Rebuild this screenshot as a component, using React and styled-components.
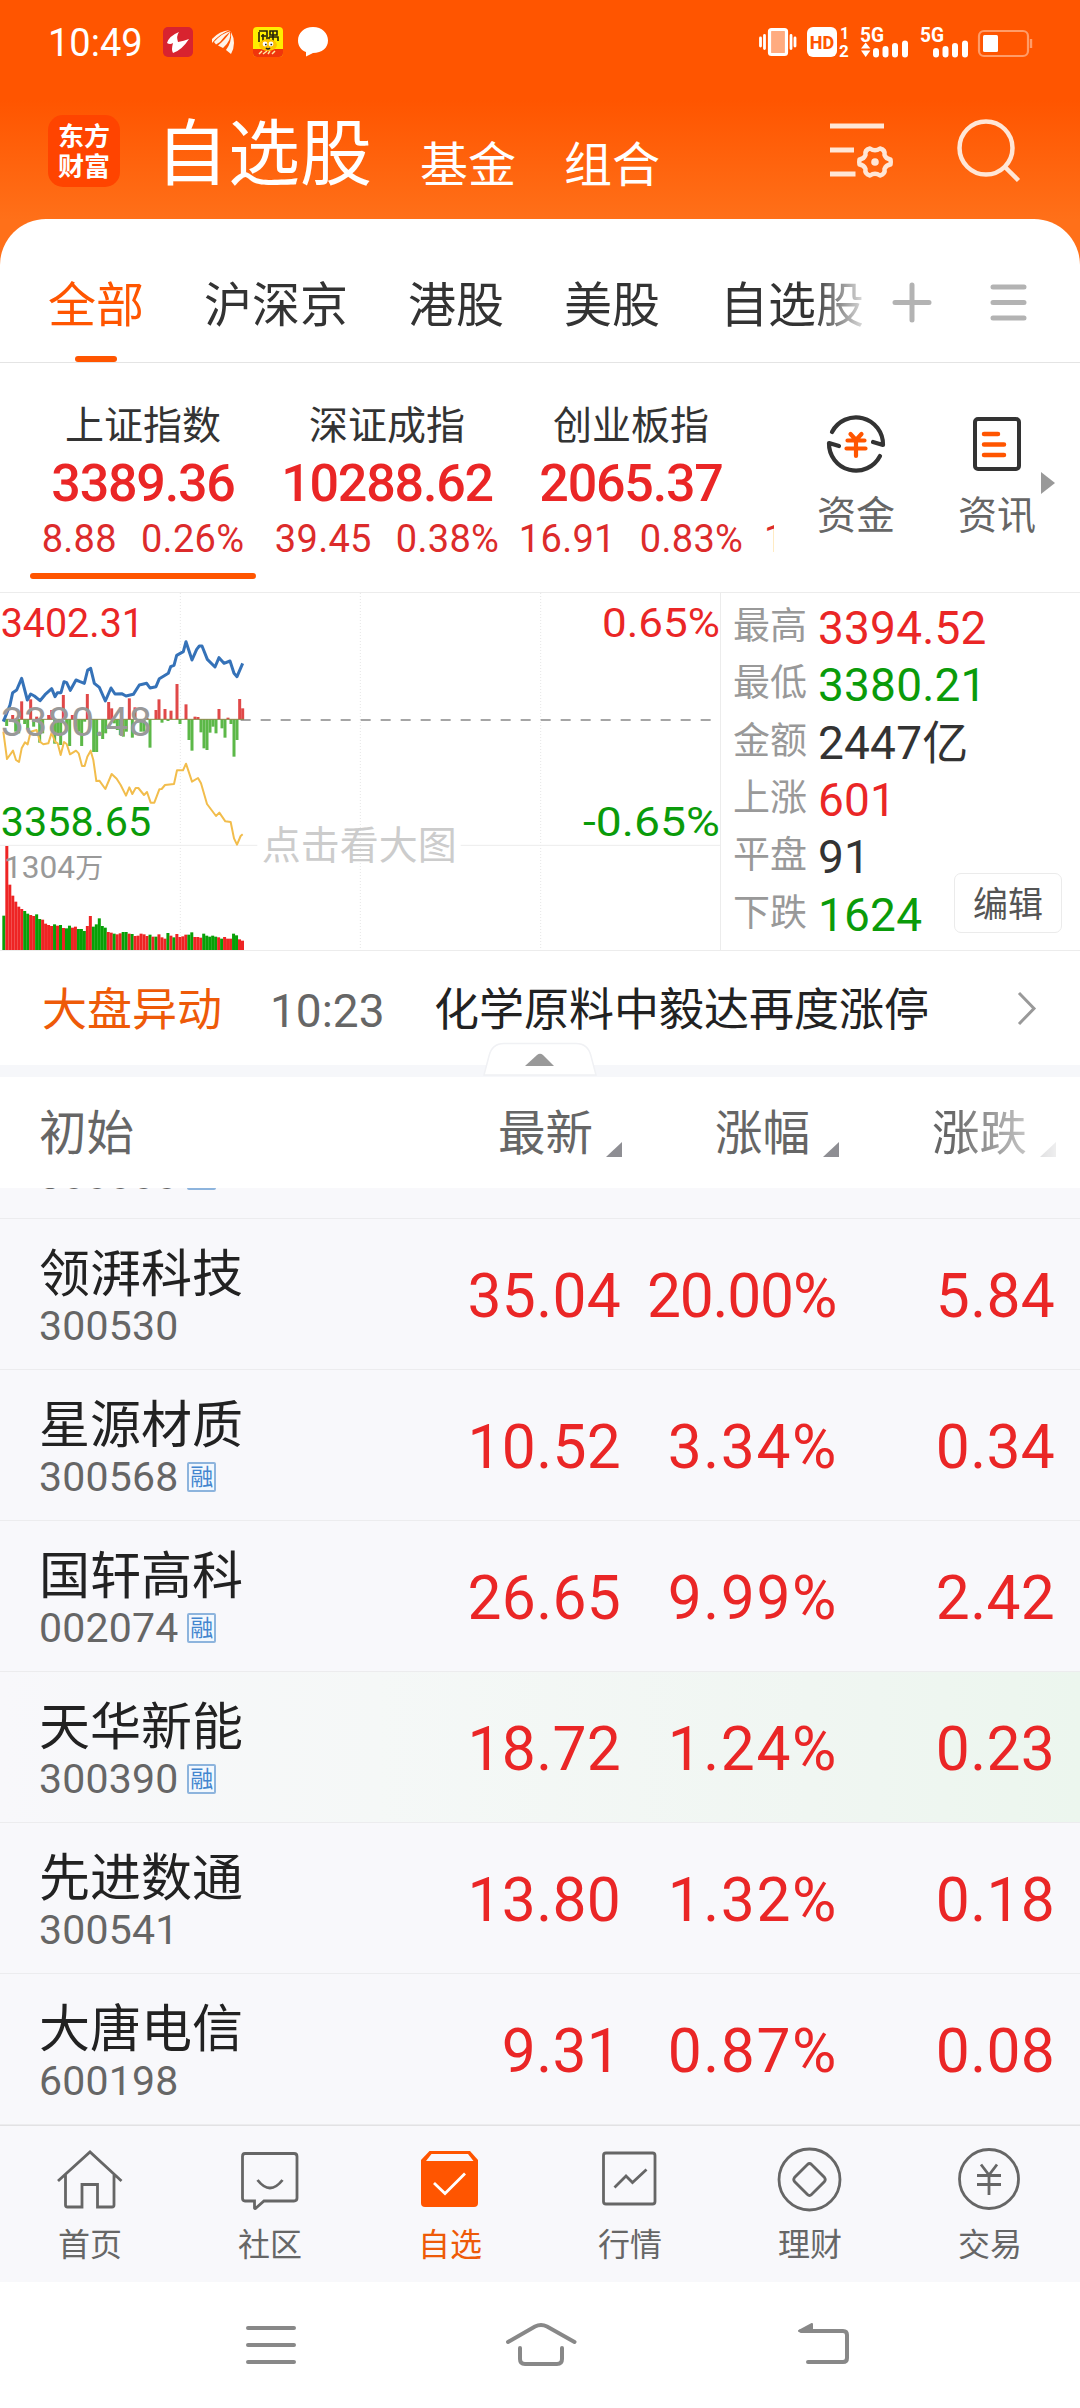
import React from "react";
import styled, { createGlobalStyle, css } from "styled-components";

const GlobalStyle = createGlobalStyle`
  * {
    box-sizing: border-box;
  }
  body {
    margin: 0;
    background: #fff;
    font-family: Roboto, "Noto Sans CJK SC", sans-serif;
    color: #333;
  }
  svg {
    display: block;
    flex: none;
    overflow: visible;
  }
`;

const RED = "#ea2626";
const GREEN = "#0a9b0a";
const ORANGE = "#ff5500";

const tabs = ["全部", "沪深京", "港股", "美股", "自选股"];

const indexData = [
  { name: "上证指数", value: "3389.36", diff: "8.88", rate: "0.26%", active: true },
  { name: "深证成指", value: "10288.62", diff: "39.45", rate: "0.38%" },
  { name: "创业板指", value: "2065.37", diff: "16.91", rate: "0.83%" },
];

const statData = [
  { label: "最高", value: "3394.52", color: RED },
  { label: "最低", value: "3380.21", color: GREEN },
  { label: "金额", value: "2447亿", color: "#333" },
  { label: "上涨", value: "601", color: RED },
  { label: "平盘", value: "91", color: "#333" },
  { label: "下跌", value: "1624", color: GREEN },
];

const stockData = [
  { name: "领湃科技", code: "300530", price: "35.04", rate: "20.00%", diff: "5.84" },
  { name: "星源材质", code: "300568", margin: true, price: "10.52", rate: "3.34%", diff: "0.34" },
  { name: "国轩高科", code: "002074", margin: true, price: "26.65", rate: "9.99%", diff: "2.42" },
  { name: "天华新能", code: "300390", margin: true, price: "18.72", rate: "1.24%", diff: "0.23", flash: true },
  { name: "先进数通", code: "300541", price: "13.80", rate: "1.32%", diff: "0.18" },
  { name: "大唐电信", code: "600198", price: "9.31", rate: "0.87%", diff: "0.08" },
];

// 成交量柱顶，第二个值为 1 表示红柱
const volumeData = [
  [977, 0], [768, 1], [884, 1], [917, 1], [935, 1], [950, 1], [957, 1], [963, 0], [971, 0],
  [975, 1], [978, 1], [973, 0], [987, 0], [989, 1], [1001, 1], [1005, 1], [1008, 1], [1003, 0],
  [1007, 1], [1005, 0], [1014, 1], [1015, 0], [1007, 0], [1013, 1], [1010, 1], [1017, 0], [1017, 0],
  [1023, 0], [1008, 1], [978, 1], [1010, 0], [1003, 0], [985, 0], [1008, 0], [1013, 0], [1026, 1],
  [1028, 1], [1031, 0], [1033, 1], [1030, 1], [1026, 0], [1026, 0], [1031, 1], [1032, 0], [1038, 1],
  [1037, 1], [1031, 1], [1033, 1], [1038, 1], [1034, 0], [1040, 1], [1040, 0], [1033, 1], [1042, 1],
  [1046, 1], [1029, 0], [1037, 1], [1042, 0], [1032, 1], [1041, 1], [1039, 1], [1034, 1], [1034, 0],
  [1027, 0], [1041, 1], [1041, 1], [1043, 1], [1031, 0], [1037, 0], [1040, 0], [1037, 0], [1040, 0],
  [1042, 1], [1046, 0], [1041, 1], [1046, 1], [1046, 1], [1031, 0], [1036, 0], [1048, 1], [1052, 1],
];

// 红绿柱: [x, y]，y 小于中线为红
const powerData = [
  [20, 408], [38, 375], [47, 425], [56, 430], [65, 334], [74, 402], [83, 418], [92, 328], [101, 410],
  [110, 380], [119, 458], [128, 430], [146, 375], [155, 360], [164, 461], [173, 430], [182, 465],
  [190, 315], [200, 410], [209, 468], [217, 375], [227, 410], [236, 425], [245, 468], [254, 395],
  [262, 312], [281, 486], [290, 486], [308, 447], [317, 430], [326, 336], [335, 355], [343, 400],
  [352, 420], [361, 435], [370, 440], [379, 425], [388, 325], [397, 443], [405, 352], [423, 425],
  [432, 425], [441, 384], [450, 473], [468, 360], [477, 328], [486, 398], [495, 357], [504, 393],
  [513, 362], [531, 282], [540, 402], [558, 343], [567, 450], [576, 482], [585, 380], [594, 381],
  [603, 427], [612, 475], [621, 480], [630, 428], [639, 410], [648, 430], [657, 357], [666, 415],
  [675, 443], [684, 383], [693, 402], [702, 500], [711, 450], [719, 327], [728, 355],
];

const priceLine =
  "10,395 20,370 30,345 38,308 50,300 65,265 82,330 92,312 103,318 120,332 135,314 155,296 165,320 172,308 183,308 192,275 200,278 211,301 228,270 240,275 253,280 263,240 272,235 283,280 298,292 316,333 333,294 345,312 365,311 378,318 400,313 418,285 440,280 450,294 468,290 478,266 505,250 512,230 522,226 530,196 550,185 558,155 576,210 590,178 598,168 606,168 622,208 645,231 657,203 672,220 690,213 702,250 711,260 728,220";

const leadLine =
  "10,425 21,507 39,482 48,510 57,516 65,475 75,457 83,463 92,425 110,420 120,455 130,463 145,460 155,428 165,455 173,460 182,495 192,456 200,462 210,493 228,482 236,490 246,528 254,528 262,500 272,482 280,510 289,573 298,572 316,597 335,552 350,566 362,585 378,617 388,592 397,612 407,594 415,594 432,615 441,606 452,638 463,638 478,598 485,597 495,585 522,582 531,541 549,541 558,521 576,575 594,564 603,580 621,642 648,678 658,668 676,694 692,696 702,745 711,764 722,738 728,733";

const Page = styled.div`
  width: 1080px;
  height: 2408px;
  overflow: hidden;
  display: flex;
  flex-direction: column;
  background: linear-gradient(#ff5500 0, #ff5500 100px, #ff7019 220px, #ff7019 300px, #fff 300px);
`;

const StatusBar = styled.div`
  height: 84px;
  display: flex;
  justify-content: space-between;
  padding: 27px 47px 0 48px;
`;

const StatusGroup = styled.div`
  display: flex;
  align-items: flex-start;
`;

const Clock = styled.span`
  width: 115px;
  font-size: 38px;
  line-height: 32px;
  color: #fff;
`;

const Header = styled.header`
  height: 135px;
  display: flex;
  padding: 0 61px 0 48px;
`;

const Logo = styled.div`
  width: 72px;
  height: 72px;
  margin-top: 31px;
  padding-top: 5px;
  border-radius: 15px;
  background: #ff4400;
  color: #fff;
  font-family: "Noto Sans CJK SC", sans-serif;
  font-size: 26px;
  font-weight: 700;
  line-height: 30px;
  text-align: center;
`;

const HeaderTabs = styled.nav`
  display: flex;
  align-items: flex-start;
  gap: 48px;
  margin-left: 36px;
  padding-top: 25px;
  flex: 1;
`;

const HeaderTab = styled.span`
  padding-top: ${(props) => (props.$active ? 0 : 11)}px;
  font-size: ${(props) => (props.$active ? 72 : 48)}px;
  line-height: 92px;
  color: #fff;
`;

const HeaderIcons = styled.div`
  display: flex;
  gap: 62px;
  padding-top: 35px;
`;

const Sheet = styled.main`
  flex: 1;
  display: flex;
  flex-direction: column;
  border-radius: 46px 46px 0 0;
  overflow: hidden;
  background: #fff;
`;

const TabBar = styled.div`
  height: 144px;
  display: flex;
  border-bottom: 1px solid #e4e4e4;
`;

const TabScroll = styled.div`
  flex: none;
  width: 862px;
  display: flex;
  gap: 60px;
  padding-left: 48px;
  overflow: hidden;
  mask-image: linear-gradient(to right, #000 812px, transparent 874px);
`;

const Tab = styled.div`
  flex: none;
  display: flex;
  flex-direction: column;
  align-items: center;
  justify-content: space-between;
  padding-top: 57px;
  font-size: 48px;
  line-height: 60px;
  color: ${(props) => (props.$active ? ORANGE : "#333")};

  &::after {
    content: "";
    width: 42px;
    height: 6px;
    border-radius: 3px;
    background: ${(props) => (props.$active ? ORANGE : "transparent")};
  }
`;

const TabTools = styled.div`
  display: flex;
  gap: 56px;
  padding: 63px 0 0 30px;
`;

const IndexBar = styled.section`
  height: 229px;
  display: flex;
  padding-left: 21px;
`;

const IndexScroll = styled.div`
  flex: none;
  width: 753px;
  display: flex;
  overflow: hidden;
`;

const IndexCard = styled.div`
  flex: none;
  width: 244px;
  display: flex;
  flex-direction: column;
  align-items: center;
  padding-top: 39px;
`;

const IndexName = styled.div`
  font-size: 39px;
  line-height: 48px;
`;

const IndexValue = styled.div`
  font-size: 52px;
  font-weight: 500;
  line-height: 68px;
  letter-spacing: -1.2px;
  color: ${RED};
`;

const IndexChange = styled.div`
  display: flex;
  gap: 24px;
  font-size: 38px;
  line-height: 42px;
  letter-spacing: 0.3px;
  color: #dc2b2b;
`;

const IndexLine = styled.div`
  width: 226px;
  height: 6px;
  margin-top: 13px;
  border-radius: 3px;
  background: ${ORANGE};
`;

const NextIndex = styled.div`
  flex: none;
  padding: 155px 0 0 11px;
  font-size: 38px;
  line-height: 42px;
  color: #dc2b2b;
`;

const Shortcuts = styled.div`
  display: flex;
  align-items: flex-start;
  gap: 63px;
  padding: 52px 0 0 43px;
`;

const Shortcut = styled.div`
  width: 78px;
  display: flex;
  flex-direction: column;
  gap: 21px;
  align-items: center;
  font-size: 39px;
  line-height: 44px;
  color: #666;
`;

const MoreArrow = styled.svg`
  margin: 109px 0 0 5px;
`;

const Market = styled.section`
  position: relative;
  height: 359px;
  display: flex;
  border-top: 1px solid #ececec;
  border-bottom: 1px solid #ececec;
`;

const ChartBox = styled.div`
  width: 721px;
  border-right: 1px solid #ececec;
`;

const Stats = styled.div`
  padding: 7px 0 0 12px;
`;

const StatRow = styled.div`
  height: 57.3px;
  display: flex;
  align-items: center;
  gap: 11px;
`;

const StatLabel = styled.span`
  font-size: 37px;
  line-height: 50px;
  margin-bottom: 3px;
  color: #999;
`;

const StatValue = styled.span`
  font-size: 46px;
  line-height: 57px;
  letter-spacing: 0.2px;
  color: ${(props) => props.$color};
`;

// 浮在统计列表右下角
const EditButton = styled.button`
  position: absolute;
  right: 18px;
  bottom: 17px;
  width: 108px;
  height: 60px;
  padding: 6px 0 0;
  border: 1px solid #ebebeb;
  border-radius: 7px;
  background: #fff;
  font: 35px/50px Roboto, "Noto Sans CJK SC", sans-serif;
  color: #555;
`;

const News = styled.section`
  position: relative;
  height: 126px;
  display: flex;
  align-items: flex-start;
  padding: 30px 43px 0 42px;
  border-bottom: 12px solid #f6f7fa;
  font-size: 45px;
  line-height: 60px;
`;

const NewsTitle = styled.span`
  width: 228px;
  color: #ee5a08;
`;

const NewsTime = styled.span`
  width: 164px;
  font-size: 46px;
  color: #666;
`;

const NewsText = styled.span`
  flex: 1;
  color: #222;
`;

const FoldHandle = styled.svg`
  position: absolute;
  left: 483px;
  bottom: -11px;
`;

const rowGrid = css`
  display: grid;
  grid-template-columns: 322px 261px 217px 217px;
  padding: 0 0 0 39px;
`;

const TableHead = styled.div`
  ${rowGrid}
  height: 111px;
  padding-top: 25px;
  font-size: 47.5px;
  line-height: 64px;
  color: #666;
`;

const HeadCell = styled.div`
  display: flex;
  justify-content: flex-end;
  gap: 13px;
  ${(props) =>
    props.$fade &&
    css`
      mask-image: linear-gradient(to right, #000 110px, rgba(0, 0, 0, 0.15) 217px);
    `}
`;

const SortMark = styled.svg`
  margin-top: 40px;
`;

const StockList = styled.div`
  background: #f8f8fb;
`;

const Peek = styled.div`
  height: 31px;
  overflow: hidden;
  display: flex;
  flex-direction: column;
  justify-content: flex-end;
`;

const StockRow = styled.div`
  ${rowGrid}
  flex: none;
  height: 151px;
  border-bottom: 1px solid #ececee;
  background: ${(props) =>
    props.$flash
      ? "linear-gradient(to right, #f8f8fb 0%, #f5f8f7 35%, #f0f6f2 75%, #ecf6ee 100%)"
      : "transparent"};
`;

const StockName = styled.div`
  padding-top: 25px;
  font-size: 51px;
  line-height: 61px;
  color: #222;
`;

const StockCode = styled.div`
  display: flex;
  align-items: center;
  gap: 9px;
  font-size: 41px;
  line-height: 42px;
  letter-spacing: 0.2px;
  color: #666;
`;

const MarginBadge = styled.span`
  width: 29px;
  height: 30px;
  border: 2px solid #8db4dd;
  border-radius: 2px;
  background: #f2f8fe;
  font-size: 23px;
  line-height: 27px;
  text-align: center;
  color: #4386cf;
`;

const StockValue = styled.div`
  font-size: 60.5px;
  line-height: 156px;
  letter-spacing: ${(props) => props.$spacing || 0.3}px;
  padding-right: ${(props) => (props.$spacing < 0 ? 3 : 1)}px;
  text-align: right;
  color: ${RED};
`;

const BottomNav = styled.nav`
  height: 157px;
  display: grid;
  grid-template-columns: repeat(6, 1fr);
  border-top: 1px solid #e2e2e4;
  background: #f8f8fb;
`;

const NavItem = styled.div`
  display: flex;
  flex-direction: column;
  align-items: center;
  gap: 14px;
  padding-top: 21px;
  font-size: 32px;
  line-height: 40px;
  color: ${(props) => (props.$active ? "#ee5a08" : "#666")};
`;

const SystemBar = styled.div`
  height: 126px;
  display: flex;
  padding: 37px 0 0 244px;
  background: #fff;
`;

const SystemIcon = styled.svg`
  margin-right: ${(props) => props.$after}px;
`;

const StatusLeftIcons = () => (
  <svg width="170" height="32" viewBox="163 27 170 32">
    <rect x="163" y="27" width="30" height="30" rx="5" fill="#d8232f" />
    <path d="M179 32 Q169 36 167 43 Q170 45 173 43 Q171 50 173 53 Q182 50 189 39 Q184 41 178 42 Q176 36 179 32Z" fill="#fff" />
    <path d="M212 43 V39 Q219 31 230 30 Q219 34 212 43Z M216 44.500 L214 42 Q222 33 231 31 Q224 36 220 42Z M223 48 L218 45.500 Q226 39 230 32 Q232 40 223 48Z M226 50 Q232 42 231 32 Q237 43 231 54Z" fill="#fff3e8" />
    <rect x="253" y="27" width="30" height="30" rx="4" fill="#ffee00" />
    <path d="M253 49h30v4q0 4-4 4h-22q-4 0-4-4z" fill="#f0350c" />
    <path d="M259 32v10M259 31h8v10M263 34v7M261 36h5M270 31h7v4h-7zM269 37h9v4M269 37v4M273 31v10" stroke="#25220a" strokeWidth="1.6" fill="none" />
    <ellipse cx="268" cy="45" rx="9" ry="6" fill="#ffc400" />
    <circle cx="265" cy="44" r="2.4" fill="#fff" />
    <circle cx="271" cy="44" r="2.4" fill="#fff" />
    <path d="M265 44.5h1.6M270.500 44.5h1.6M266 48q2 2 4 0" stroke="#222" strokeWidth="1.6" fill="none" />
    <path d="M259 54l3-3M263 54l4-3M268 54l2-3M272 54l3-3" stroke="#ffe8a0" strokeWidth="1.5" />
    <path d="M313 27 C322 27 328 33 328 40.500 C328 48 322 53 313 53 L306 56.500 L306 52 C301 50 298 46 298 40.500 C298 33 304 27 313 27Z" fill="#fff" />
  </svg>
);

const StatusRightIcons = () => (
  <svg width="275" height="32" viewBox="758 27 275 32" fill="#fff">
    <path d="M760.500 38v8M764.500 35.500v13M791 35.500v13M795 38v8" stroke="#fff" strokeWidth="2.800" strokeLinecap="round" />
    <rect x="769.500" y="29.500" width="17" height="25" rx="2" fill="#ffab80" stroke="#fff" strokeWidth="3.200" />
    <rect x="807" y="27" width="30" height="30" rx="6" />
    <text x="822" y="48.500" fontSize="18" fontWeight="800" textAnchor="middle" fill={ORANGE}>HD</text>
    <text x="840" y="38.500" fontSize="16" fontWeight="700">1</text>
    <text x="839" y="57" fontSize="17" fontWeight="700">2</text>
    <text x="860" y="42" fontSize="20" fontWeight="700" textLength="24" lengthAdjust="spacingAndGlyphs">5G</text>
    <path d="M861 48.500l4.700-6 4.700 6zM861 50.500l4.700 6.500 4.700-6.500z" />
    <path d="M876 51v3.500M885.500 49v5.500M895 46v8.500M905 43.500v11M936 51v3.500M945.500 49v5.500M955 46v8.500M965 43.500v11" stroke="#fff" strokeWidth="6" strokeLinecap="round" />
    <text x="920" y="42" fontSize="20" fontWeight="700" textLength="24" lengthAdjust="spacingAndGlyphs">5G</text>
    <rect x="979" y="31" width="49" height="25" rx="5" fill="none" stroke="#ff9c68" strokeWidth="2.200" />
    <rect x="983" y="35" width="15" height="17" rx="1.500" />
    <path d="M1031 39v9" stroke="#ff9c68" strokeWidth="2.400" />
  </svg>
);

const FilterIcon = () => (
  <svg width="64" height="60" viewBox="830 120 64 60" fill="none" stroke="#ffe6d6" strokeWidth="5">
    <path d="M831 127h54M831 151h24M831 175h25.500" />
    <path
      d="M871 149.500 Q876 153 881 149.500 Q886.500 151 885.500 156 Q887 160 891.500 160.500 Q892 163 891.500 165.500 Q887 166 885.500 170 Q886.500 175 881 176.500 Q876 173 871 176.500 Q865.500 175 866.500 170 Q865 166 860.500 165.500 Q860 163 860.500 160.500 Q865 160 866.500 156 Q865.500 151 871 149.500Z"
      strokeWidth="4.500"
      strokeLinejoin="round"
    />
    <circle cx="876" cy="163" r="3.800" fill="#ffe6d6" stroke="none" />
  </svg>
);

const SearchIcon = () => (
  <svg width="64" height="64" viewBox="956 119 64 64" fill="none" stroke="#ffe6d6" strokeWidth="4.500">
    <circle cx="987" cy="148" r="26.500" />
    <path d="M1006 167l13.500 13.500" />
  </svg>
);

const FundIcon = () => (
  <svg width="62" height="58" viewBox="-31 -29 62 58" fill="none" stroke="#333" strokeWidth="4.200" strokeLinejoin="round" strokeLinecap="round">
    <path d="M-24 -12 A27 27 0 0 1 27 1 L17 -2" />
    <path d="M24 12 A27 27 0 0 1 -27 -1 L-17 2" />
    <path d="M-5.500 -10 L0 -4 L5.500 -10 M-8.500 -3.500 H8.500 M-9.500 4.500 H9.500 M0 -4 V12" stroke={ORANGE} />
  </svg>
);

const InfoIcon = () => (
  <svg width="50" height="58" viewBox="0 0 50 58" fill="none" strokeWidth="4">
    <rect x="3" y="4" width="44" height="50" rx="3" stroke="#333" />
    <path d="M12 19h14M12 29.500h20M12 40h20" stroke={ORANGE} strokeWidth="4.500" strokeLinecap="round" />
  </svg>
);

const navIcons = {
  home: (
    <path d="M58 2181 L90 2152 L121.500 2181 M65.500 2175 V2205 Q65.500 2207 67.500 2207 H82 V2184.500 H97.500 V2207 H112 Q114 2207 114 2205 V2175" />
  ),
  chat: (
    <>
      <path d="M245 2153.500 H294 Q297 2153.500 297 2156.500 V2198 Q297 2201 294 2201 H264 L256 2208 Q255 2209 254.500 2208 V2201 H245 Q242.500 2201 242.500 2198 V2156.500 Q242.500 2153.500 245 2153.500Z" />
      <path d="M257.500 2180 Q270 2196 282.500 2180" />
    </>
  ),
  pick: (
    <>
      <path d="M429.500 2151 H470 L478 2160 V2203 Q478 2207 474 2207 H425 Q421 2207 421 2203 V2160Z" fill={ORANGE} stroke="none" />
      <path d="M431.500 2154 H468 L473.500 2161 H426Z" fill="#f8f8fb" stroke="none" />
      <path d="M434 2183 L445 2193.500 L465 2173.500" stroke="#fff" />
    </>
  ),
  market: (
    <>
      <rect x="603.500" y="2153" width="51.500" height="51" rx="2.500" />
      <path d="M614.500 2187.500 L626 2176 L632.500 2182.500 L646.500 2169.500" />
    </>
  ),
  wealth: (
    <>
      <circle cx="809.500" cy="2179.500" r="30.500" />
      <path d="M807.500 2164.500 Q809.500 2162.500 811.500 2164.500 L824.500 2177.500 Q826 2179.500 824.500 2181.500 L811.500 2194.500 Q809.500 2196.500 807.500 2194.500 L794.500 2181.500 Q793 2179.500 794.500 2177.500Z" />
    </>
  ),
  trade: (
    <>
      <circle cx="989" cy="2179" r="29.500" />
      <path d="M981 2164.500 L989 2175 L997 2164.500 M977 2175.500 H1001 M977 2184.500 H1001 M989 2175 V2195" />
    </>
  ),
};

const navData = [
  { label: "首页", icon: "home", x: 90 },
  { label: "社区", icon: "chat", x: 270 },
  { label: "自选", icon: "pick", x: 450, active: true },
  { label: "行情", icon: "market", x: 630 },
  { label: "理财", icon: "wealth", x: 810 },
  { label: "交易", icon: "trade", x: 990 },
];

// 图表坐标为 3 倍像素
const TrendChart = () => (
  <svg width="720" height="357" viewBox="0 9 2160 1071" fontFamily='Roboto, "Noto Sans CJK SC", sans-serif'>
    <path d="M541 9V1080M1081 9V1080M1622 9V1080" stroke="#e6e6e6" strokeWidth="3" strokeDasharray="3 6" />
    <path d="M0 766H772M1382 766H2160" stroke="#ececec" strokeWidth="3" />
    <path d="M722 390H2140" stroke="#888" strokeWidth="5" strokeDasharray="30 30" />
    {powerData.map(([x, y]) => (
      <rect
        key={x}
        x={x - 4.5}
        y={Math.min(y, 388)}
        width="9"
        height={Math.abs(y - 388)}
        fill={y < 388 ? "#e04848" : "#5cb848"}
      />
    ))}
    <path d="M8 388H732" stroke="#8a8a4a" strokeWidth="3" />
    {volumeData.map(([y, up], i) => (
      <rect key={i} x={7 + i * 8.95} y={y} width="9" height={1080 - y} fill={up ? "#ee2424" : "#07a007"} />
    ))}
    <polyline points={leadLine} fill="none" stroke="#f2bd4c" strokeWidth="6" strokeLinejoin="round" />
    <polyline points={priceLine} fill="none" stroke="#3572b8" strokeWidth="9" strokeLinejoin="round" />
    <text x="2" y="140" fontSize="124" fill={RED} textLength="430" lengthAdjust="spacingAndGlyphs">3402.31</text>
    <text x="2" y="437" fontSize="124" fill="#999" textLength="454">3380.48</text>
    <text x="2" y="737" fontSize="124" fill={GREEN} textLength="452">3358.65</text>
    <text x="2160" y="140" fontSize="124" fill={RED} textAnchor="end" textLength="354" lengthAdjust="spacingAndGlyphs">0.65%</text>
    <text x="2160" y="737" fontSize="124" fill={GREEN} textAnchor="end" textLength="411" lengthAdjust="spacingAndGlyphs">-0.65%</text>
    <text x="12" y="863" fontSize="95" fill="#999">1304<tspan fontSize="84">万</tspan></text>
    <text x="785" y="808" fontSize="117" fill="#ccc">点击看大图</text>
  </svg>
);

const Stock = ({ item }) => (
  <StockRow $flash={item.flash}>
    <div>
      <StockName>{item.name}</StockName>
      <StockCode>
        {item.code}
        {item.margin && <MarginBadge>融</MarginBadge>}
      </StockCode>
    </div>
    <StockValue>{item.price}</StockValue>
    <StockValue $spacing={item.rate.length > 5 ? -1.2 : 1.6}>{item.rate}</StockValue>
    <StockValue>{item.diff}</StockValue>
  </StockRow>
);

const HeadLabel = ({ text, fade }) => (
  <HeadCell $fade={fade}>
    {text}
    <SortMark width="16" height="15">
      <path d="M16 0V15H0Z" fill="#8e8e93" />
    </SortMark>
  </HeadCell>
);

const App = () => {
  return (
    <>
      <GlobalStyle />
      <Page>
        <StatusBar>
          <StatusGroup>
            <Clock>10:49</Clock>
            <StatusLeftIcons />
          </StatusGroup>
          <StatusRightIcons />
        </StatusBar>
        <Header>
          <Logo>
            东方
            <br />
            财富
          </Logo>
          <HeaderTabs>
            <HeaderTab $active>自选股</HeaderTab>
            <HeaderTab>基金</HeaderTab>
            <HeaderTab>组合</HeaderTab>
          </HeaderTabs>
          <HeaderIcons>
            <FilterIcon />
            <SearchIcon />
          </HeaderIcons>
        </Header>
        <Sheet>
          <TabBar>
            <TabScroll>
              {tabs.map((tab, index) => (
                <Tab key={tab} $active={index === 0}>
                  {tab}
                </Tab>
              ))}
            </TabScroll>
            <TabTools>
              <svg width="40" height="40" stroke="#b3b3b3" strokeWidth="5" strokeLinecap="round">
                <path d="M20 3v35M3 20.500h34" />
              </svg>
              <svg width="38" height="40" stroke="#b3b3b3" strokeWidth="5" strokeLinecap="round">
                <path d="M5 5h31M5 20.500h31M5 36h31" />
              </svg>
            </TabTools>
          </TabBar>

          <IndexBar>
            <IndexScroll>
              {indexData.map((item) => (
                <IndexCard key={item.name}>
                  <IndexName>{item.name}</IndexName>
                  <IndexValue>{item.value}</IndexValue>
                  <IndexChange>
                    <span>{item.diff}</span>
                    <span>{item.rate}</span>
                  </IndexChange>
                  {item.active && <IndexLine />}
                </IndexCard>
              ))}
              <NextIndex>1</NextIndex>
            </IndexScroll>
            <Shortcuts>
              <Shortcut>
                <FundIcon />
                资金
              </Shortcut>
              <Shortcut>
                <InfoIcon />
                资讯
              </Shortcut>
            </Shortcuts>
            <MoreArrow width="14" height="22">
              <path d="M0 0L14 11L0 22Z" fill="#999" />
            </MoreArrow>
          </IndexBar>

          <Market>
            <ChartBox>
              <TrendChart />
            </ChartBox>
            <Stats>
              {statData.map((item) => (
                <StatRow key={item.label}>
                  <StatLabel>{item.label}</StatLabel>
                  <StatValue $color={item.color}>{item.value}</StatValue>
                </StatRow>
              ))}
            </Stats>
            <EditButton>编辑</EditButton>
          </Market>

          <News>
            <NewsTitle>大盘异动</NewsTitle>
            <NewsTime>10:23</NewsTime>
            <NewsText>化学原料中毅达再度涨停</NewsText>
            <svg width="20" height="56" fill="none" stroke="#999" strokeWidth="3">
              <path d="M2 12L17 27.500L2 43" />
            </svg>
            <FoldHandle width="114" height="34" viewBox="483 1042 114 34">
              <path d="M484 1075 L489 1056 Q492 1043.500 504 1043.500 H576 Q588 1043.500 591 1056 L596 1075Z" fill="#fff" stroke="#f0f1f4" strokeWidth="1.500" />
              <path d="M525 1066 L537 1055 Q540 1052.500 543 1055 L554 1066Z" fill="#999" />
            </FoldHandle>
          </News>

          <TableHead>
            <div>初始</div>
            <HeadLabel text="最新" />
            <HeadLabel text="涨幅" />
            <HeadLabel text="涨跌" fade />
          </TableHead>

          <StockList>
            <Peek>
              <StockRow>
                <div>
                  <StockName>&nbsp;</StockName>
                  <StockCode>
                    300000
                    <MarginBadge />
                  </StockCode>
                </div>
              </StockRow>
            </Peek>
            {stockData.map((item) => (
              <Stock key={item.code} item={item} />
            ))}
          </StockList>

          <BottomNav>
            {navData.map((item) => (
              <NavItem key={item.label} $active={item.active}>
                <svg
                  width="72"
                  height="64"
                  viewBox={`${item.x - 36} 2147 72 64`}
                  fill="none"
                  stroke="#666"
                  strokeWidth="2.800"
                >
                  {navIcons[item.icon]}
                </svg>
                {item.label}
              </NavItem>
            ))}
          </BottomNav>

          <SystemBar>
            <SystemIcon $after={206} width="54" height="50" viewBox="244 2319 54 50" stroke="#888" strokeWidth="4" strokeLinecap="round">
              <path d="M248 2328h46M248 2345h46M248 2362h46" />
            </SystemIcon>
            <SystemIcon $after={216} width="74" height="50" viewBox="504 2319 74 50" fill="none" stroke="#888" strokeWidth="4" strokeLinecap="round">
              <path d="M508 2342 L535 2326.500 Q541 2323.500 547 2326.500 L574.500 2342" />
              <path d="M520 2348 V2359 Q520 2364 525 2364 H557 Q562 2364 562 2359 V2348" />
            </SystemIcon>
            <SystemIcon $after={0} width="58" height="50" viewBox="794 2319 58 50" fill="none" stroke="#888" strokeWidth="4" strokeLinecap="round">
              <path d="M801 2331 H843 Q847 2331 847 2335 V2358 Q847 2362 843 2362 H808" />
              <path d="M799 2331 L812 2324 V2331Z" fill="#888" strokeWidth="2" strokeLinejoin="round" />
            </SystemIcon>
          </SystemBar>
        </Sheet>
      </Page>
    </>
  );
};

export default App;
